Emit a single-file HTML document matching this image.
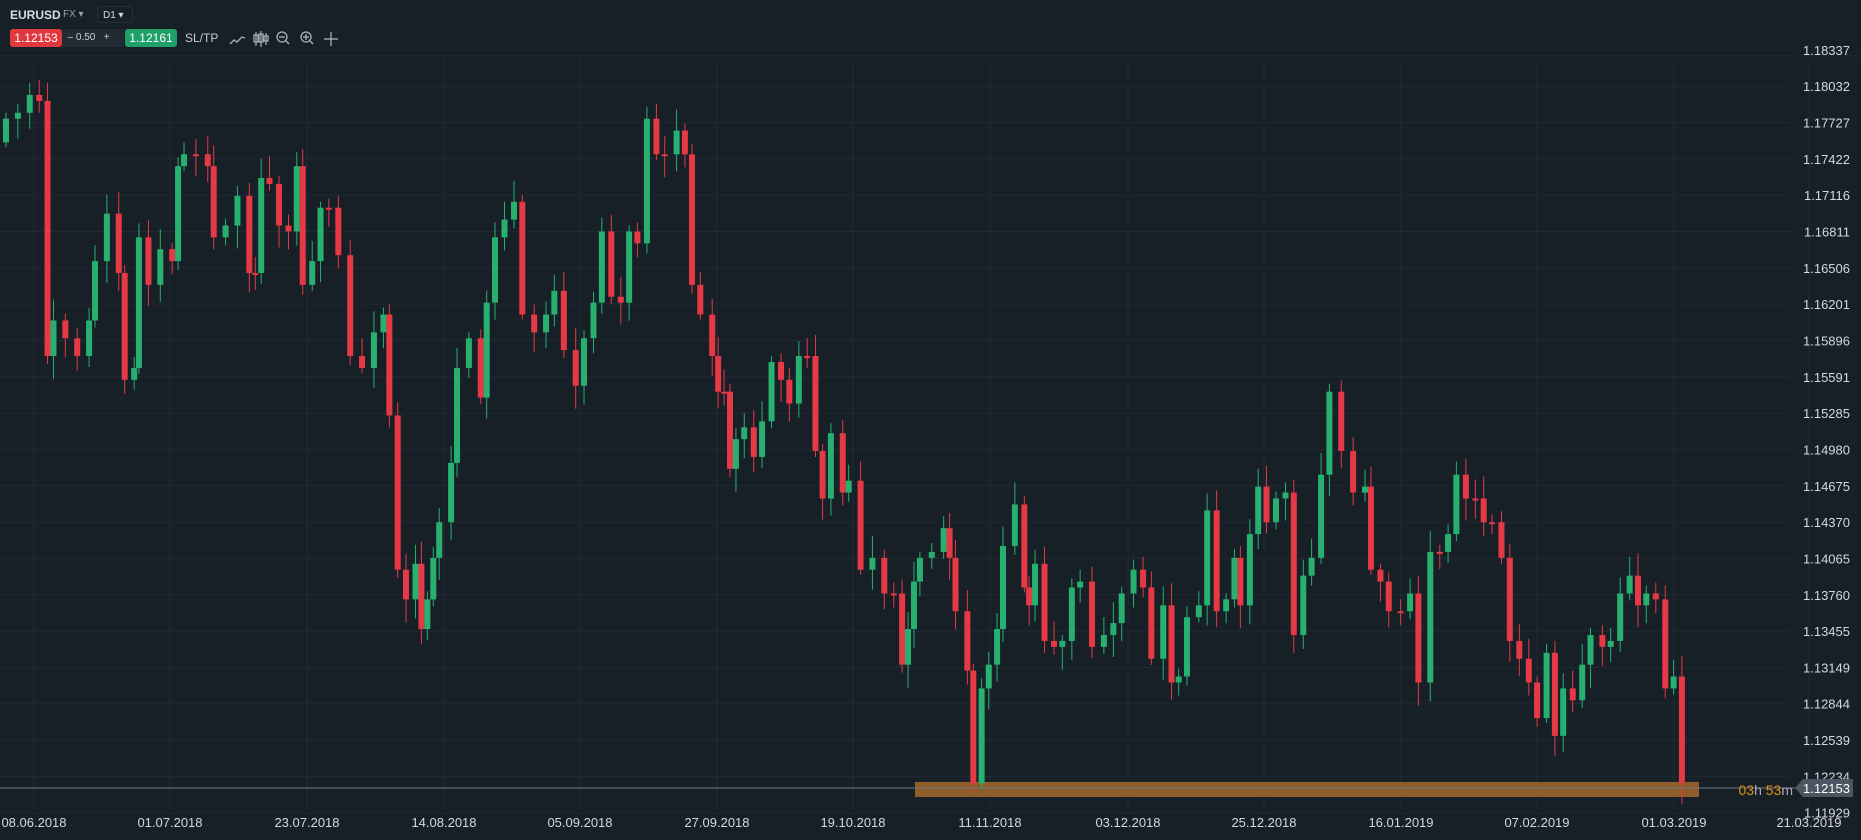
<!DOCTYPE html>
<html><head><meta charset="utf-8"><style>
html,body{margin:0;padding:0;background:#171f27;width:1861px;height:840px;overflow:hidden;font-family:"Liberation Sans",sans-serif}
svg{position:absolute;left:0;top:0}
.hdr{position:absolute;left:0;top:0;color:#dfe3e8;font-size:12px;white-space:nowrap}
.hdr div{white-space:nowrap}
</style></head><body>
<svg id="s" width="1861" height="840" xmlns="http://www.w3.org/2000/svg"></svg>
<div class="hdr">
 <div style="position:absolute;left:10px;top:8px;font-weight:bold;font-size:12px;color:#d8dce0">EURUSD</div>
 <div style="position:absolute;left:63px;top:9px;font-size:10px;color:#9aa3ab;width:30px">FX ▾</div>
 <div style="position:absolute;left:97px;top:6px;width:36px;height:17px;border:1px solid #26303a;border-radius:3px;font-size:10px;color:#d8dce0;line-height:17px;padding-left:5px;box-sizing:border-box">D1 ▾</div>
 <div style="position:absolute;left:10px;top:29px;width:52px;height:18px;background:#e0383f;border-radius:3px;color:#fff;font-size:12px;line-height:18px;text-align:center">1.12153</div>
 <div style="position:absolute;left:62px;top:29px;width:62px;height:18px;background:#222b34;color:#c8ccd0;font-size:10px;line-height:18px">&nbsp;&nbsp;– 0.50 &nbsp;&nbsp;+</div>
 <div style="position:absolute;left:125px;top:29px;width:52px;height:18px;background:#1fa06a;border-radius:3px;color:#fff;font-size:12px;line-height:18px;text-align:center">1.12161</div>
 <div style="position:absolute;left:185px;top:31px;font-size:12px;color:#c8ccd0">SL/TP</div>
</div>
<script>
(function(){
var s=document.getElementById('s'),h='';
var k=1.1869;
for(var i=0;i<22;i++){var y=49.8+i*36.33;h+='<line x1="0" x2="1790" y1="'+y+'" y2="'+y+'" stroke="#212a33" stroke-width="1"/>';}
var dx=[34,170,307,444,580,717,853,990,1128,1264,1401,1537,1674,1809];
var dl=['08.06.2018','01.07.2018','23.07.2018','14.08.2018','05.09.2018','27.09.2018','19.10.2018','11.11.2018','03.12.2018','25.12.2018','16.01.2019','07.02.2019','01.03.2019','21.03.2019'];
dx.forEach(function(x){h+='<line x1="'+x+'" x2="'+x+'" y1="60" y2="810" stroke="#212a33"/>';});
h+='<line x1="0" x2="1861" y1="56" y2="56" stroke="#212a33"/>';
h+='<rect x="915" y="782" width="784" height="15" fill="#a5682c" opacity="0.85"/>';
var d=[[0,100],[10,95],[20,80],[28,85],[35,300],[40,270],[50,285],[60,300],[70,270],[75,220],[85,180],[95,230],[100,320],[108,310],[112,200],[120,240],[130,210],[140,220],[145,140],[150,130],[160,130],[170,140],[175,200],[185,190],[195,165],[205,230],[210,230],[215,150],[222,155],[230,190],[238,195],[245,140],[250,240],[258,220],[265,175],[272,175],[280,215],[290,300],[300,310],[310,280],[318,265],[323,350],[330,480],[337,505],[345,475],[350,530],[355,505],[360,470],[365,440],[375,390],[380,310],[390,285],[400,335],[405,255],[412,200],[420,185],[428,170],[435,265],[445,280],[455,265],[462,245],[470,295],[480,325],[487,285],[495,255],[502,195],[510,250],[518,255],[525,195],[532,205],[540,100],[548,130],[555,130],[565,110],[572,130],[578,240],[585,265],[595,300],[600,330],[605,330],[610,395],[615,370],[622,360],[630,385],[637,355],[645,305],[653,320],[660,340],[668,300],[675,300],[682,380],[688,420],[695,365],[705,415],[710,405],[720,480],[730,470],[740,500],[748,500],[755,560],[760,530],[765,490],[770,470],[780,465],[790,445],[795,470],[800,515],[810,565],[815,660],[822,580],[828,560],[835,530],[840,460],[850,425],[858,495],[862,510],[867,475],[875,540],[883,545],[890,540],[898,495],[905,490],[915,545],[925,535],[933,525],[940,500],[950,480],[958,495],[965,555],[975,510],[982,575],[988,570],[995,520],[1005,510],[1012,430],[1020,515],[1028,505],[1035,470],[1040,510],[1048,450],[1055,410],[1062,440],[1070,420],[1078,415],[1085,535],[1093,485],[1100,470],[1108,400],[1115,330],[1125,380],[1135,415],[1145,410],[1150,480],[1158,490],[1165,515],[1175,515],[1183,500],[1190,575],[1200,465],[1208,465],[1215,450],[1222,400],[1230,420],[1238,420],[1245,440],[1252,440],[1260,470],[1267,540],[1275,555],[1283,575],[1290,605],[1298,550],[1305,620],[1312,580],[1320,590],[1328,560],[1335,535],[1345,545],[1352,540],[1360,500],[1368,485],[1375,510],[1382,500],[1390,505],[1398,580],[1405,570],[1412,660]];
var prev=d[0][1]+20;
for(var j=0;j<d.length;j++){
 var x=d[j][0]*k+3,c=d[j][1]*k,o=prev*k;
 var up=c<o,tp=Math.min(o,c),bt=Math.max(o,c);
 if(bt-tp<2)bt=tp+2;
 var w1=6+((j*37)%17),w2=5+((j*53)%19);
 var col=up?'#27b070':'#e63946';
 h+='<line x1="'+(x+3)+'" x2="'+(x+3)+'" y1="'+(tp-w1)+'" y2="'+(bt+w2)+'" stroke="'+col+'" stroke-width="1"/>';
 h+='<rect x="'+x+'" y="'+tp+'" width="6" height="'+(bt-tp)+'" fill="'+col+'"/>';
 prev=d[j][1];
}
h+='<line x1="0" x2="1800" y1="788" y2="788" stroke="#6b7782" stroke-width="1"/>';
var L=['1.18337','1.18032','1.17727','1.17422','1.17116','1.16811','1.16506','1.16201','1.15896','1.15591','1.15285','1.14980','1.14675','1.14370','1.14065','1.13760','1.13455','1.13149','1.12844','1.12539','1.12234','1.11929'];
for(var i=0;i<22;i++){var y=49.8+i*36.33;
 h+='<text x="1850" y="'+(y+5)+'" text-anchor="end" fill="#d5d9dd" font-size="13" font-family="Liberation Sans">'+L[i]+'</text>';}
h+='<path d="M1795 788 L1803 779 L1853 779 L1853 797 L1803 797 Z" fill="#4a5661"/>';
h+='<text x="1850" y="793" text-anchor="end" fill="#fff" font-size="13" font-family="Liberation Sans">1.12153</text>';
h+='<text x="1793" y="795" text-anchor="end" font-size="14" font-family="Liberation Sans"><tspan fill="#e8900f">03</tspan><tspan fill="#aab">h </tspan><tspan fill="#e8900f">53</tspan><tspan fill="#aab">m</tspan></text>';
dx.forEach(function(x,i){h+='<text x="'+x+'" y="827" text-anchor="middle" fill="#d5d9dd" font-size="13" font-family="Liberation Sans">'+dl[i]+'</text>';});
h+='<path d="M230 44 l4 -4 l3 2 l5 -5 l3 1" stroke="#aab2ba" fill="none" stroke-width="1.3"/>';
h+='<g stroke="#aab2ba" fill="none" stroke-width="1.2"><line x1="256" y1="32" x2="256" y2="46"/><rect x="254" y="35" width="4" height="7"/><line x1="261" y1="31" x2="261" y2="47"/><rect x="259" y="34" width="4" height="8"/><line x1="266" y1="33" x2="266" y2="45"/><rect x="264" y="36" width="4" height="5"/></g>';
h+='<g stroke="#aab2ba" fill="none" stroke-width="1.3"><circle cx="282" cy="37" r="5"/><line x1="286" y1="41" x2="289" y2="44"/><line x1="279" y1="37" x2="285" y2="37"/><circle cx="306" cy="37" r="5"/><line x1="310" y1="41" x2="313" y2="44"/><line x1="303" y1="37" x2="309" y2="37"/><line x1="306" y1="34" x2="306" y2="40"/><line x1="331" y1="32" x2="331" y2="46"/><line x1="324" y1="39" x2="338" y2="39"/></g>';
s.innerHTML=h;
})();
</script>
</body></html>
